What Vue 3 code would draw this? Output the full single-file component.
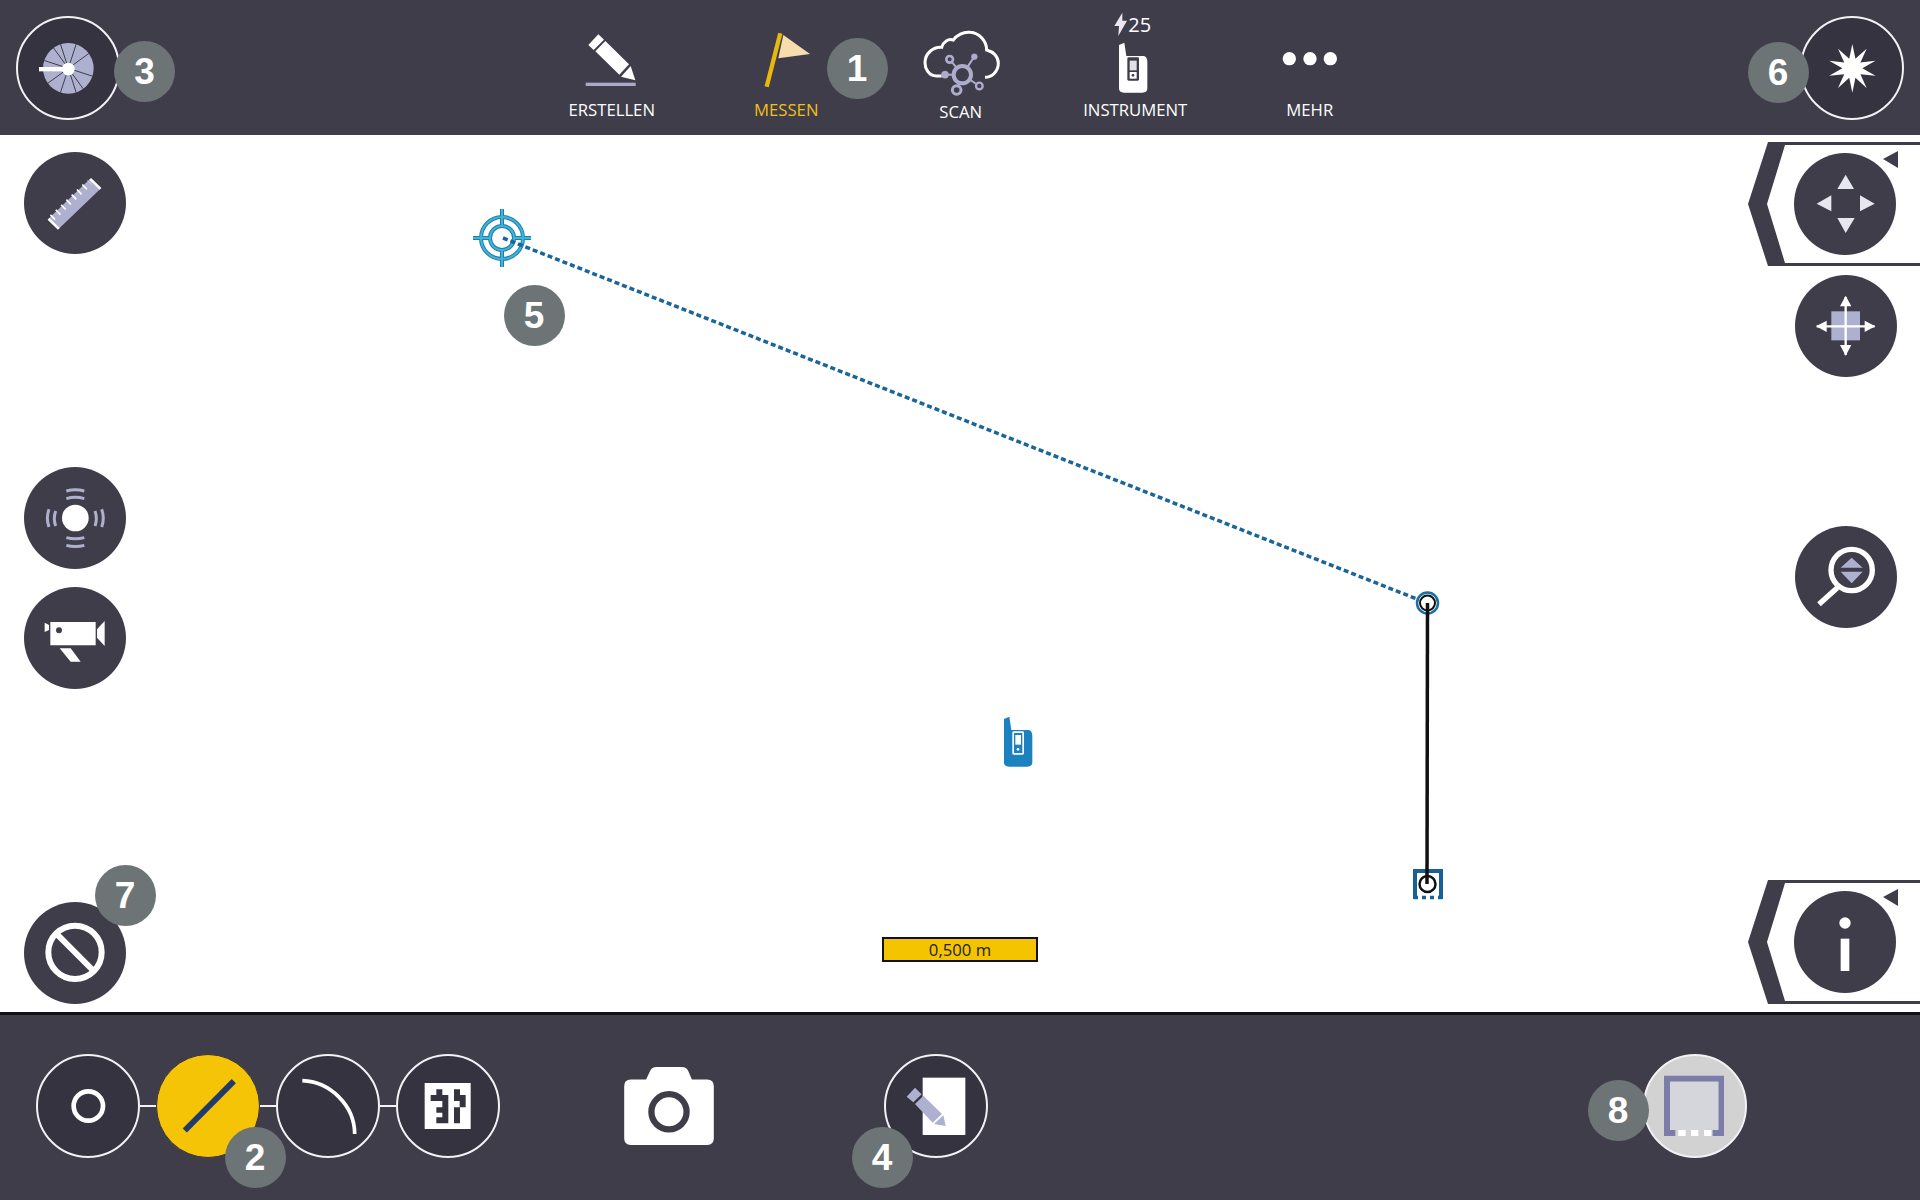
<script setup>
// numbered callouts on the screenshot, page coordinates of the centre
const badges = [
  { n: 1, x: 857, y: 68 },
  { n: 2, x: 255, y: 1157 },
  { n: 3, x: 144.5, y: 71 },
  { n: 4, x: 882, y: 1157 },
  { n: 5, x: 534, y: 315 },
  { n: 6, x: 1778, y: 72 },
  { n: 7, x: 125, y: 895 },
  { n: 8, x: 1618, y: 1110 }
]

// spokes of the disc in the top left button
const spokes = [18, 54, 108, 144, 198, 234, 288, 324, 252, 72].map((a) => {
  const r = (a * Math.PI) / 180
  return { x: 205 + 76 * Math.cos(r), y: 205 + 76 * Math.sin(r) }
})

// ten pointed star in the top right button
const starPoints = Array.from({ length: 20 }, (_, i) => {
  const r = (((i * 18 - 90) * Math.PI) / 180)
  const len = i % 2 ? 30 : 73
  return `${397 + len * Math.cos(r)},${205 + len * Math.sin(r)}`
}).join(' ')

const instrumentBody = 'M240 135 L256 128 L262 168 H315 Q325 172 325 185 V265 Q325 278 310 278 H255 Q240 278 240 265 Z'
</script>

<template>
  <div class="app">
    <header class="topbar">
      <button class="ring">
        <svg viewBox="54 54 300 300">
          <circle cx="205" cy="205" r="76" fill="#aeb0cf" />
          <line v-for="(s, i) in spokes" :key="i" x1="205" y1="205" :x2="s.x" :y2="s.y" stroke="#403d4b" stroke-width="3" />
          <rect x="117" y="201" width="88" height="13" fill="#fff" />
          <circle cx="205" cy="207" r="19" fill="#fff" />
        </svg>
      </button>

      <nav class="nav">
        <div class="nav-item">
          <svg viewBox="-45 0 522 297">
            <path d="M145 135 L175 103 L192 119 L161 150 Z M166 154 L196 123 L267 193 L238 224 Z M243 230 L272 198 L286 241 Z" fill="#fff" />
            <rect x="137" y="248" width="150" height="10" fill="#aba8c9" />
          </svg>
          <span>ERSTELLEN</span>
        </div>
        <div class="nav-item active">
          <svg viewBox="480 0 522 297">
            <path d="M733 105 L813 162 L718 175 Z" fill="#f7dcae" />
            <line x1="724" y1="100" x2="683" y2="260" stroke="#e8b90c" stroke-width="13" />
          </svg>
          <span>MESSEN</span>
        </div>
        <div class="nav-item scan">
          <svg viewBox="1002 0 522 297">
            <path d="M1205 228 H1190 C1165 228 1155 205 1155 188 C1155 160 1180 140 1205 142 C1210 125 1225 115 1240 120 C1250 105 1270 95 1290 97 C1320 99 1340 125 1340 150 C1360 155 1375 170 1375 190 C1375 215 1355 232 1335 232" fill="none" stroke="#fff" stroke-width="9" />
            <g stroke="#aeaccd" fill="none">
              <path d="M1267 224 L1229 178 M1267 224 L1303 170 M1267 224 H1215 M1267 224 L1318 258 M1267 224 L1250 270" stroke-width="6" />
              <circle cx="1267" cy="224" r="26" stroke-width="12" fill="#403d4b" />
              <circle cx="1229" cy="178" r="10" stroke-width="8" fill="#403d4b" />
              <circle cx="1303" cy="170" r="9" fill="#aeaccd" />
              <circle cx="1215" cy="224" r="11" fill="#aeaccd" />
              <circle cx="1318" cy="258" r="10" stroke-width="7" fill="#403d4b" />
              <circle cx="1250" cy="270" r="13" stroke-width="9" fill="#403d4b" />
            </g>
          </svg>
          <span>SCAN</span>
        </div>
        <div class="nav-item">
          <svg viewBox="27 0 522 297">
            <path d="M250 38 L226 78 L240 78 L238 108 L264 62 L250 62 Z" fill="#e8e8ee" />
            <text x="268" y="95" class="charge">25</text>
            <path :d="instrumentBody" fill="#fff" />
            <rect x="265" y="172" width="35" height="70" rx="4" fill="#403d4b" />
            <rect x="272" y="182" width="21" height="29" fill="#e2e2e6" />
            <rect x="272" y="216" width="21" height="20" fill="#fff" />
            <circle cx="282" cy="226" r="4" fill="#403d4b" />
          </svg>
          <span>INSTRUMENT</span>
        </div>
        <div class="nav-item">
          <svg viewBox="546 0 522 297">
            <circle cx="745" cy="176" r="20" fill="#fff" />
            <circle cx="807" cy="176" r="20" fill="#fff" />
            <circle cx="868" cy="176" r="20" fill="#fff" />
          </svg>
          <span>MEHR</span>
        </div>
      </nav>

      <button class="ring">
        <svg viewBox="246 54 300 300">
          <polygon :points="starPoints" fill="#fff" />
        </svg>
      </button>
    </header>

    <main class="canvas">
      <svg class="sketch" viewBox="0 135 1920 877">
        <g fill="none" stroke="#1f7fa8" stroke-width="4">
          <circle cx="502" cy="238" r="21" />
          <circle cx="502" cy="238" r="12" />
          <path d="M473 238 H490 M514 238 H531 M502 209 V226 M502 250 V267" />
        </g>
        <g fill="none" stroke="#3fb4dc" stroke-width="2">
          <circle cx="502" cy="238" r="21" />
          <circle cx="502" cy="238" r="12" />
          <path d="M473 238 H490 M514 238 H531 M502 209 V226 M502 250 V267" />
        </g>
        <line x1="503" y1="238" x2="1427" y2="603" stroke="#1a659a" stroke-width="3.5" stroke-dasharray="5 3" />

        <circle cx="1427.5" cy="603" r="10.5" fill="#fff" stroke="#1a6fa3" stroke-width="2.5" />
        <circle cx="1427.5" cy="603" r="7.5" fill="#fff" stroke="#111" stroke-width="2" />

        <path d="M1415 899 V871 H1441 V899" fill="none" stroke="#1a5f96" stroke-width="4" />
        <line x1="1414" y1="897.5" x2="1442" y2="897.5" stroke="#1a5f96" stroke-width="3.5" stroke-dasharray="4 4" />
        <circle cx="1427.5" cy="884" r="8" fill="none" stroke="#111" stroke-width="2.5" />
        <line x1="1427.5" y1="603" x2="1427" y2="884" stroke="#111" stroke-width="3.5" />

        <g transform="translate(924 674) scale(.3333)">
          <path :d="instrumentBody" fill="#1b81bf" />
          <rect x="265" y="172" width="35" height="70" rx="4" fill="#fff" />
          <rect x="270" y="177" width="25" height="60" fill="#1b81bf" />
          <rect x="274" y="183" width="17" height="29" fill="#fff" />
          <circle cx="282" cy="226" r="4" fill="#fff" />
        </g>
      </svg>

      <div class="scale">0,500 m</div>

      <aside class="col-left">
        <button class="round first">
          <svg viewBox="73.5 454.5 306 306">
            <path d="M147 655 L272 535 L303 565 L178 685 Z" fill="#aeb0cf" />
            <line x1="158" y1="652" x2="270" y2="545" stroke="#fff" stroke-width="20" stroke-dasharray="5 17" />
            <path d="M147 655 L178 685 M272 535 L303 565" stroke="#fff" stroke-width="8" />
          </svg>
        </button>
        <button class="round gap-large">
          <svg viewBox="73 48 306 306">
            <g fill="none" stroke="#aeb0cf" stroke-width="9">
              <path d="M148 175 Q138 202 148 228 M168 180 Q160 203 168 225" />
              <path d="M306 175 Q316 202 306 228 M286 180 Q294 203 286 225" />
              <path d="M200 120 Q227 113 254 120 M200 143 Q227 135 254 143" />
              <path d="M200 260 Q227 267 254 260 M200 283 Q227 290 254 283" />
            </g>
            <circle cx="227" cy="201" r="40" fill="#fff" />
          </svg>
        </button>
        <button class="round gap-small">
          <svg viewBox="73 408 306 306">
            <path d="M152 513 H288 V583 H152 Z M135 515 L148 522 V537 L135 543 Z M292 535 L315 510 V585 L292 560 Z M180 592 H213 L243 632 H213 Z" fill="#fff" />
            <circle cx="178" cy="538" r="9" fill="#403d4b" />
          </svg>
        </button>
        <button class="round push-down">
          <svg viewBox="73 155 306 306">
            <circle cx="226" cy="306" r="80" fill="none" stroke="#fff" stroke-width="18" />
            <line x1="170" y1="250" x2="282" y2="362" stroke="#fff" stroke-width="18" />
          </svg>
        </button>
      </aside>

      <aside class="col-right">
        <div class="panel first-panel">
          <svg class="panel-frame" viewBox="0 0 172 124">
            <path d="M20 0 H172 V3 H37 L19 62 L37 121 H172 V124 H20 L0 62 Z" fill="#403d4b" />
            <path d="M135 17 L150 9 V26 Z" fill="#403d4b" />
          </svg>
          <button class="round">
            <svg viewBox="220 460 306 306">
              <path d="M375 525 L400 568 H350 Z M350 655 H402 L375 700 Z M288 612 L332 587 V635 Z M418 587 L462 612 L418 635 Z" fill="#e6e6ee" />
            </svg>
          </button>
        </div>
        <button class="round move">
          <svg viewBox="223 826 306 306">
            <rect x="332" y="935" width="86" height="87" fill="#aeb0cf" />
            <path d="M288 980 H462 M375 892 V1066" stroke="#fff" stroke-width="7" />
            <path d="M375 888 L358 920 H392 Z M375 1068 L358 1036 H392 Z M286 980 L318 963 V997 Z M464 980 L432 963 V997 Z" fill="#fff" />
          </svg>
        </button>
        <button class="round zoom">
          <svg viewBox="223 50 306 306">
            <circle cx="393" cy="182" r="62" fill="none" stroke="#fff" stroke-width="16" />
            <line x1="350" y1="235" x2="295" y2="285" stroke="#fff" stroke-width="16" />
            <path d="M393 145 L426 175 H360 Z M360 187 H426 L393 222 Z" fill="#aeb0cf" />
          </svg>
        </button>
        <div class="panel last-panel">
          <svg class="panel-frame" viewBox="0 0 172 124">
            <path d="M20 0 H172 V3 H37 L19 62 L37 121 H172 V124 H20 L0 62 Z" fill="#403d4b" />
            <path d="M135 17 L150 9 V26 Z" fill="#403d4b" />
          </svg>
          <button class="round">
            <svg viewBox="0 0 306 306">
              <circle cx="153" cy="96" r="17" fill="#fff" />
              <rect x="140" y="143" width="26" height="97" fill="#fff" />
            </svg>
          </button>
        </div>
      </aside>
    </main>

    <footer class="bottombar">
      <div class="tools">
        <button class="ring">
          <svg viewBox="55 78 300 300">
            <circle cx="206" cy="228" r="44" fill="none" stroke="#fff" stroke-width="14" />
          </svg>
        </button>
        <i class="link"></i>
        <button class="ring selected">
          <svg viewBox="413 75 306 306">
            <line x1="495" y1="303" x2="645" y2="152" stroke="#1f3a6b" stroke-width="18" />
          </svg>
        </button>
        <i class="link"></i>
        <button class="ring">
          <svg viewBox="775 78 300 300">
            <path d="M848 152 C930 155 1005 225 1005 312" fill="none" stroke="#fff" stroke-width="11" />
          </svg>
        </button>
        <i class="link"></i>
        <button class="ring">
          <svg viewBox="1135 78 300 300">
            <rect x="1215" y="159" width="138" height="138" fill="#fff" />
            <path d="M1250 178 H1268 V195 H1286 V280 H1250 V262 H1268 V248 H1250 V232 H1268 V213 H1233 V195 H1250 Z M1303 178 H1321 V195 H1338 V232 H1321 V280 H1303 V232 H1320 V213 H1303 Z" fill="#363341" />
          </svg>
        </button>
      </div>

      <svg class="camera" viewBox="72 80 270 235">
        <path d="M92 118 H138 L150 92 Q155 80 170 80 H245 Q260 80 265 92 L276 118 H322 Q342 118 342 138 V295 Q342 315 322 315 H92 Q72 315 72 295 V138 Q72 118 92 118 Z" fill="#fff" />
        <circle cx="207" cy="215" r="53" fill="none" stroke="#403d4b" stroke-width="19" />
      </svg>

      <button class="ring note">
        <svg viewBox="858 48 300 300">
          <rect x="968" y="113" width="128" height="172" fill="#fff" />
          <path d="M920 170 L945 143 L965 163 L940 187 Z M945 192 L970 167 L1026 222 L998 248 Z M1002 252 L1030 226 L1037 258 Z" fill="#aeb0cf" />
        </svg>
      </button>

      <button class="ring area">
        <svg viewBox="225 48 300 300">
          <path d="M282 107 H462 V288 H428 V270 H445 V125 H300 V270 H316 V288 H282 Z" fill="#7b7da8" />
          <rect x="300" y="125" width="145" height="145" fill="#d5d6dc" />
          <rect x="325" y="270" width="22" height="18" fill="#fff" />
          <rect x="363" y="270" width="22" height="18" fill="#fff" />
          <rect x="402" y="270" width="22" height="18" fill="#fff" />
        </svg>
      </button>
    </footer>

    <div
      v-for="b in badges"
      :key="b.n"
      class="badge"
      :style="{ left: b.x + 'px', top: b.y + 'px' }"
    >{{ b.n }}</div>
  </div>
</template>

<style scoped>
.app {
  position: relative;
  display: flex;
  flex-direction: column;
  height: 1200px;
  overflow: hidden;
  background: #fff;
  font-family: "Open Sans", sans-serif;
}

button {
  display: flex;
  align-items: center;
  justify-content: center;
  flex: none;
  padding: 0;
  border: none;
  border-radius: 50%;
  box-sizing: border-box;
}

/* outlined buttons in the two dark bars */
.ring {
  width: 104px;
  height: 104px;
  background: #363341;
  border: 2px solid #f2f2f5;
}
.ring svg {
  width: 100px;
  height: 100px;
}

/* filled buttons on the map */
.round {
  width: 102px;
  height: 102px;
  background: #403d4b;
}
.round svg {
  width: 102px;
  height: 102px;
}

.topbar {
  display: flex;
  flex: none;
  align-items: center;
  justify-content: space-between;
  height: 135px;
  padding: 0 16px;
  box-sizing: border-box;
  background: #403d4b;
}

.nav {
  display: flex;
  margin-left: 1.5px;
}
.nav-item {
  display: flex;
  flex-direction: column;
  align-items: center;
  width: 174.5px;
  height: 135px;
  color: #fff;
  font-size: 16.7px;
  line-height: 22px;
}
.nav-item svg {
  flex: none;
  width: 174px;
  height: 99px;
}
.nav-item.active {
  color: #f1c016;
}
.nav-item.scan span {
  margin-top: 2px;
}
.charge {
  font-size: 60px;
  fill: #fff;
}

.canvas {
  position: relative;
  display: flex;
  flex: 1;
  justify-content: space-between;
  min-height: 0;
}
.sketch {
  position: absolute;
  top: 0;
  left: 0;
  width: 1920px;
  height: 877px;
}
.scale {
  position: absolute;
  top: 802px;
  left: 882px;
  width: 156px;
  height: 25px;
  box-sizing: border-box;
  border: 2px solid #111;
  background: #f5c400;
  color: #222;
  font-size: 16.7px;
  line-height: 22px;
  text-align: center;
}

.col-left,
.col-right {
  position: relative;
  display: flex;
  flex-direction: column;
}
.col-left {
  padding: 17px 0 8px 24px;
}
.col-right {
  align-items: flex-end;
  padding: 7px 0 8px;
}
.gap-large {
  margin-top: 213px;
}
.gap-small {
  margin-top: 18px;
}
.push-down {
  margin-top: auto;
}

.panel {
  position: relative;
  display: flex;
  align-items: center;
  width: 172px;
  height: 124px;
  padding-left: 46px;
  box-sizing: border-box;
}
.panel button {
  position: relative;
}
.panel-frame {
  position: absolute;
  top: 0;
  left: 0;
  width: 172px;
  height: 124px;
}
.last-panel {
  margin-top: auto;
}
.move {
  margin: 9px 23px 0 0;
}
.zoom {
  margin: 149px 23px 0 0;
}

.bottombar {
  display: flex;
  flex: none;
  align-items: flex-start;
  height: 188px;
  padding: 39px 0 0 36px;
  box-sizing: border-box;
  border-top: 3px solid #111;
  background: #403d4b;
}
.tools {
  display: flex;
  align-items: center;
}
.link {
  width: 16px;
  height: 2px;
  background: #f2f2f5;
}
.ring.selected {
  background: #f5c406;
  border: 1px solid #363341;
}
.camera {
  flex: none;
  width: 90px;
  height: 78px;
  margin: 13px 0 0 124px;
}
.note {
  margin-left: 170px;
}
.ring.area {
  margin-left: 655px;
  background: #d2d2d2;
}

.badge {
  position: absolute;
  width: 61px;
  height: 61px;
  margin: -30.5px 0 0 -30.5px;
  border-radius: 50%;
  background: #6c7476;
  color: #fff;
  font-family: "Liberation Sans", sans-serif;
  font-size: 37px;
  font-weight: 700;
  line-height: 61px;
  text-align: center;
}
</style>
